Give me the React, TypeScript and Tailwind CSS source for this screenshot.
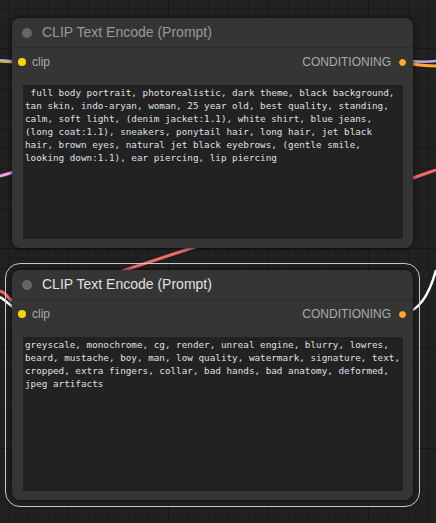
import React from 'react';

// prompt text below is a neutral stand-in for the original prompt wording
const positivePrompt =
  ' full body portrait, photorealistic, dark theme, black background, tan skin, indo-aryan, woman, 25 year old, best quality, standing, calm, soft light, (denim jacket:1.1), white shirt, blue jeans, (long coat:1.1), sneakers, ponytail hair, long hair, jet black hair, brown eyes, natural jet black eyebrows, (gentle smile, looking down:1.1), ear piercing, lip piercing';

const negativePrompt =
  'greyscale, monochrome, cg, render, unreal engine, blurry, lowres, beard, mustache, boy, man, low quality, watermark, signature, text, cropped, extra fingers, collar, bad hands, bad anatomy, deformed, jpeg artifacts';

interface NodeProps {
  text: string;
  selected?: boolean;
}

const ClipNode: React.FC<NodeProps> = ({ text, selected }) => (
  <div
    className={`flex h-[230px] w-[401px] flex-col rounded-[8px] bg-[#353535] shadow-[0_0_4px_rgba(0,0,0,0.8)] ${
      selected ? 'outline-[1.5px] outline-offset-[6px] outline-solid outline-[#c8c8c8]' : ''
    }`}
  >
    <div className="flex h-[30px] items-center gap-[10px] border-b border-[#2b2b2b] pl-[10px]">
      <div className="h-[10px] w-[10px] rounded-full bg-[#666]" />
      <span
        className={`font-['Liberation_Sans',Arial,sans-serif] text-[14px] ${
          selected ? 'text-[#e0e0e0]' : 'text-[#999]'
        }`}
      >
        CLIP Text Encode (Prompt)
      </span>
    </div>
    <div className="flex h-[28px] items-center justify-between px-[6px] font-['Liberation_Sans',Arial,sans-serif] text-[12px] text-[#aaa]">
      <div className="flex items-center gap-[6px]">
        <div className="h-2 w-2 rounded-full bg-[#ffd500]" />
        <span>clip</span>
      </div>
      <div className="flex items-center gap-[7px]">
        <span>CONDITIONING</span>
        <div className="h-[9px] w-[9px] rounded-full border border-[#222] bg-[#ffa931]" />
      </div>
    </div>
    <div className="mx-[11px] mt-[9px] h-[154px] w-[380px] bg-[#222] px-[2px] pt-[1px] font-['DejaVu_Sans_Mono',monospace] text-[9.3px] leading-[13px] whitespace-pre-wrap break-words text-[#dde0e4]">
      {text}
    </div>
  </div>
);

export default function App() {
  return (
    <div className="relative h-[523px] w-[436px] overflow-hidden bg-[#212121] bg-[linear-gradient(to_right,#171717_1px,transparent_1px),linear-gradient(to_bottom,#171717_1px,transparent_1px),linear-gradient(to_right,#1b1b1b_1px,transparent_1px),linear-gradient(to_bottom,#1b1b1b_1px,transparent_1px)] bg-[size:100px_100px,100px_100px,10px_10px,10px_10px] bg-[position:68px_0,0_48px,8px_0,0_8px]">
      <svg className="absolute inset-0" width="436" height="523" fill="none">
        {/* links */}
        <path d="M0 61 L14 62" stroke="#e0c020" strokeWidth="3" />
        <path d="M0 60 L14 61" stroke="#b7a6e0" strokeWidth="2" />
        <path d="M403 63 C418 65 428 66 436 66" stroke="#ffa931" strokeWidth="3" />
        <path d="M410 61 C420 62 428 62 436 61" stroke="#b7a6e0" strokeWidth="2.5" />
        <path d="M0 176 L14 172" stroke="#f0a0f0" strokeWidth="3" />
        <path d="M410 179 L436 170" stroke="#f06a6a" strokeWidth="3" />
        <path d="M80 285 C130 268 180 252 240 232" stroke="#f06a6a" strokeWidth="3" />
        <path d="M0 291 C6 293 8 298 12 301" stroke="#f06a6a" strokeWidth="3" />
        <path d="M0 297 C5 300 9 304 14 308" stroke="#ffffff" strokeWidth="2.5" />
        <path d="M405 313 C420 310 430 292 436 270" stroke="#ffffff" strokeWidth="2.5" />
      </svg>
      <div className="relative flex flex-col gap-[22px] pl-3 pt-[18px]">
        <ClipNode text={positivePrompt} />
        <ClipNode text={negativePrompt} selected />
      </div>
    </div>
  );
}
